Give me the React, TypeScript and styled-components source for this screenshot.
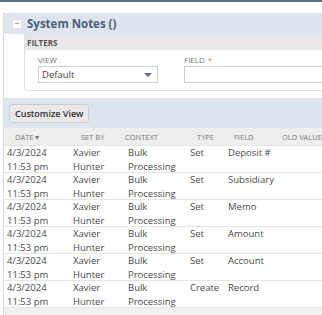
import React from 'react';
import { createGlobalStyle, styled } from 'styled-components';

const GlobalStyle = createGlobalStyle`
  html, body {
    margin: 0;
    padding: 0;
    background: #ffffff;
    overflow: hidden;
  }
  body {
    font-family: "Open Sans", "Liberation Sans", sans-serif;
    color: #444;
  }
`;

const TopBar = styled.div`
  height: 2px;
  background-color: #5b6f8e;
`;

const Panel = styled.section`
  margin: 11px 0 0 3px;
  width: 420px;
  border-left: 1px solid #dcdcdc;
`;

const PanelHeader = styled.div`
  display: flex;
  align-items: center;
  gap: 6px;
  height: 21px;
  padding-left: 9px;
  background-color: #dfe5ee;
`;

const CollapseBox = styled.span`
  display: flex;
  align-items: center;
  justify-content: center;
  width: 8px;
  height: 8px;
  background-color: #ffffff;

  &::after {
    content: '';
    width: 4px;
    height: 1px;
    background-color: #9aa3ad;
  }
`;

const Title = styled.h2`
  margin: 0;
  font-size: 11.5px;
  font-weight: 700;
  color: #4d5f7a;
`;

const Filters = styled.div`
  margin-left: 20px;
  border-left: 1px solid #e2e2e2;
  border-bottom: 1px solid #e2e2e2;
  border-bottom-left-radius: 4px;
`;

const FiltersHead = styled.div`
  height: 16px;
  padding-left: 2px;
  display: flex;
  align-items: center;
  background-color: #e7e7e7;
  font-size: 8px;
  font-weight: 700;
  color: #555;
`;

const FiltersBody = styled.div`
  display: flex;
  gap: 26px;
  padding: 4px 0 7px 13px;
`;

const FilterField = styled.div<{ $width: number }>`
  display: flex;
  flex-direction: column;
  width: ${(p) => p.$width}px;
`;

const Label = styled.label`
  height: 12px;
  font-size: 8px;
  color: #777;
  text-transform: uppercase;

  & b {
    color: #e08a2a;
    font-weight: 400;
    margin-left: 3px;
  }
`;

const SelectBox = styled.div`
  display: flex;
  align-items: center;
  justify-content: space-between;
  height: 15px;
  padding: 0 5px 0 3px;
  border: 1px solid #cfcfcf;
  font-size: 9.5px;
  color: #444;
`;

const Arrow = styled.span`
  width: 0;
  height: 0;
  border-left: 4px solid transparent;
  border-right: 4px solid transparent;
  border-top: 4px solid #5d7090;
`;

const Toolbar = styled.div`
  margin-top: 7px;
  height: 30px;
  padding-left: 5px;
  display: flex;
  align-items: center;
  background-color: #dfe5ee;
`;

const Button = styled.button`
  height: 19px;
  padding: 0 5px;
  border: 1px solid #c9cbcf;
  border-radius: 3px;
  background-color: #e9e9e9;
  font-family: inherit;
  font-size: 9px;
  font-weight: 600;
  color: #333;
`;

const Grid = styled.div`
  display: grid;
  grid-template-columns: 66px 55px 62px 38px 52px 1fr;
`;

const HeadRow = styled(Grid)`
  height: 17px;
  align-items: center;
  background-color: #eeeeee;
`;

const HeadCell = styled.div<{ $indent: number }>`
  padding-left: ${(p) => p.$indent}px;
  font-size: 7.5px;
  color: #7a7a7a;
  white-space: nowrap;
`;

const Row = styled(Grid)`
  height: 26px;
  border-top: 1px solid #e4e4e4;
`;

const Cell = styled.div`
  padding-left: 3px;
  font-size: 9.5px;
  line-height: 14px;
  color: #4a4a4a;
  white-space: nowrap;
`;

const TableEnd = styled.div`
  height: 8px;
  border-top: 1px solid #e4e4e4;
  background-color: #f0f0f0;
`;

const headers = [
  { label: 'DATE ▾', indent: 11 },
  { label: 'SET BY', indent: 11 },
  { label: 'CONTEXT', indent: 0 },
  { label: 'TYPE', indent: 10 },
  { label: 'FIELD', indent: 9 },
  { label: 'OLD VALUE', indent: 5 },
];

const notes = [
  { type: 'Set', field: 'Deposit #' },
  { type: 'Set', field: 'Subsidiary' },
  { type: 'Set', field: 'Memo' },
  { type: 'Set', field: 'Amount' },
  { type: 'Set', field: 'Account' },
  { type: 'Create', field: 'Record' },
];

const App = () => {
  return (
    <>
      <GlobalStyle />
      <TopBar />
      <Panel>
        <PanelHeader>
          <CollapseBox />
          <Title>System Notes ()</Title>
        </PanelHeader>
        <Filters>
          <FiltersHead>FILTERS</FiltersHead>
          <FiltersBody>
            <FilterField $width={120}>
              <Label>View</Label>
              <SelectBox>
                Default
                <Arrow />
              </SelectBox>
            </FilterField>
            <FilterField $width={200}>
              <Label>
                Field<b>*</b>
              </Label>
              <SelectBox />
            </FilterField>
          </FiltersBody>
        </Filters>
        <Toolbar>
          <Button>Customize View</Button>
        </Toolbar>
        <HeadRow>
          {headers.map((h) => (
            <HeadCell key={h.label} $indent={h.indent}>
              {h.label}
            </HeadCell>
          ))}
        </HeadRow>
        {notes.map((n) => (
          <Row key={n.field}>
            <Cell>
              4/3/2024
              <br />
              11:53 pm
            </Cell>
            <Cell>
              Xavier
              <br />
              Hunter
            </Cell>
            <Cell>
              Bulk
              <br />
              Processing
            </Cell>
            <Cell>{n.type}</Cell>
            <Cell>{n.field}</Cell>
            <Cell />
          </Row>
        ))}
        <TableEnd />
      </Panel>
    </>
  );
};

export default App;
